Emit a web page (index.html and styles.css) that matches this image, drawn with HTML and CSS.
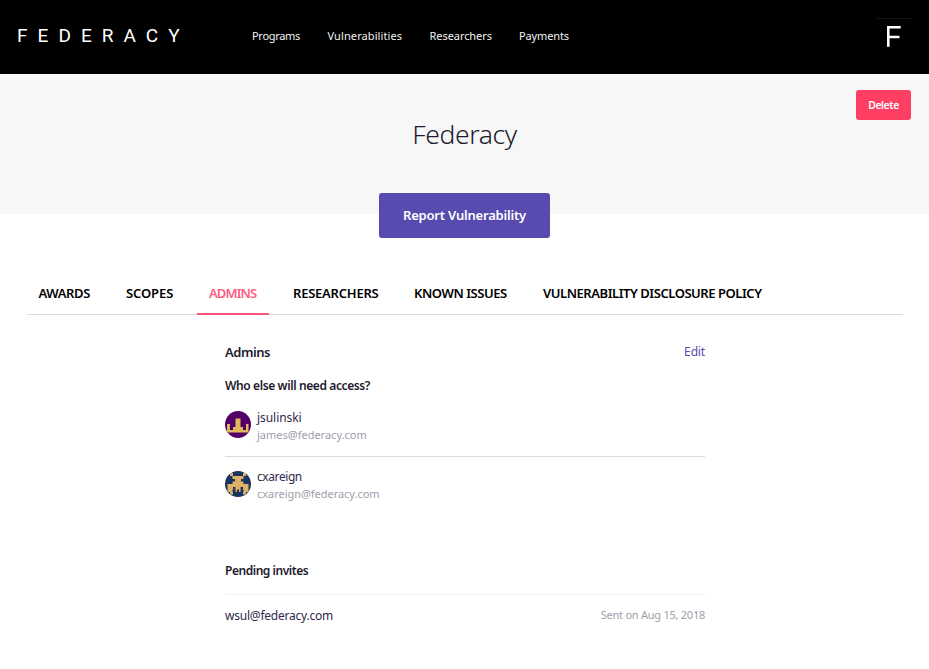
FILE: index.html
```html
<!DOCTYPE html>
<html lang="en">
<head>
<meta charset="utf-8">
<title>Federacy</title>
<link rel="stylesheet" href="styles.css">
</head>
<body>
<header class="topbar">
  <a class="logo">FEDERACY</a>
  <nav class="nav">
    <a>Programs</a><a>Vulnerabilities</a><a>Researchers</a><a>Payments</a>
  </nav>
  <div class="profile">
    <svg width="34" height="34" viewBox="0 0 34 34"><path d="M0 .5H34" stroke="#161616"/><path d="M11.300 28.800V9.200H23.700M11.300 19H22.500" fill="none" stroke="#fff" stroke-width="2.600"/></svg>
  </div>
</header>
<section class="hero">
  <button class="delete">Delete</button>
  <h1>Federacy</h1>
  <button class="report">Report Vulnerability</button>
</section>
<nav class="tabs">
  <a>AWARDS</a><a>SCOPES</a><a class="active">ADMINS</a><a>RESEARCHERS</a><a>KNOWN ISSUES</a><a>VULNERABILITY DISCLOSURE POLICY</a>
</nav>
<main class="content">
  <div class="heading"><h2>Admins</h2><a class="edit">Edit</a></div>
  <h3 class="question">Who else will need access?</h3>
  <div class="member first">
    <svg class="avatar" viewBox="0 0 26 27"><rect width="26" height="27" fill="#520066"/><path fill="#dfb75d" d="M2 13H5V19H8V16H10.500V7.500H15.500V16H18V19H21V13H23.500V21.500H2z"/></svg>
    <div><p class="name">jsulinski</p><p class="mail">james@federacy.com</p></div>
  </div>
  <div class="member second">
    <svg class="avatar" viewBox="0 0 26 26"><rect width="26" height="26" fill="#19355f"/><path fill="#deb068" d="M5 2H8V5H18V2H21V5H18.500V8H16V10.500H18.500V13H23.500V21H18.500V18.500H15.500V21H10.500V18.500H7.500V21H2.500V13H7.500V10.500H10V8H7.500V5H5zM5 21H8V23.500H5zM18 21H21V23.500H18z"/><path fill="#19355f" d="M8 16H10.500V18.500H8zM15.500 16H18V18.500H15.500zM12 18.500H14V21H12z"/></svg>
    <div><p class="name">cxareign</p><p class="mail">cxareign@federacy.com</p></div>
  </div>
  <h3 class="pending">Pending invites</h3>
  <div class="invite"><span class="address">wsul@federacy.com</span><span class="sent">Sent on Aug 15, 2018</span></div>
</main>
</body>
</html>
```
FILE: styles.css
```css
* { box-sizing: border-box; margin: 0; padding: 0; }
body { background: #fff; color: #1d1a2e; font-family: "Noto Sans", sans-serif; white-space: nowrap; }
button { border: 0; border-radius: 3px; color: #fff; font-family: inherit; font-weight: 600; display: block; }

.topbar { height: 74px; background: #000; color: #fff; display: flex; align-items: center; padding: 0 18px 0 17px; }
.logo { width: 235px; font: 400 19px/24px Roboto, sans-serif; letter-spacing: 10.05px; margin-top: -2px; }
.nav { display: flex; gap: 27px; font-size: 11px; line-height: 16px; margin-top: -2px; color: #f2f2f2; }
.nav a:nth-child(1) { width: 48.5px; letter-spacing: -.3px; }
.nav a:nth-child(2) { width: 75px; letter-spacing: .1px; }
.nav a:nth-child(3) { width: 62.5px; letter-spacing: -.06px; }
.nav a:nth-child(4) { letter-spacing: -.14px; }
.profile { margin-left: auto; height: 34px; margin-top: -4px; }
.profile svg { display: block; }

.hero { height: 140px; background: #f7f7f7; padding: 16px 18px 0; }
.delete { width: 55px; height: 30px; margin-left: auto; background: #ff3e64; font-size: 10.5px; letter-spacing: -.45px; }
h1 { font-size: 26.5px; line-height: 38px; font-weight: 300; text-align: center; letter-spacing: -.4px; margin-top: -5px; }
.report { width: 171px; height: 45px; margin: 40px auto 0; padding-bottom: 2px; background: #574bb0; font-size: 13px; letter-spacing: -.2px; }

.tabs { display: flex; gap: 12px; margin: 59px 26px 0 27px; height: 42px; border-bottom: 1px solid #dadbe2; color: #000; font-size: 13px; line-height: 41px; font-weight: 600; }
.tabs a { height: 42px; padding: 0 12px; }
.tabs a:nth-child(1) { width: 75px; padding-left: 11.5px; letter-spacing: -.4px; }
.tabs a:nth-child(2) { width: 71px; letter-spacing: -.1px; }
.tabs a:nth-child(3) { width: 72px; letter-spacing: -.88px; }
.tabs a:nth-child(4) { width: 109px; letter-spacing: -.23px; }
.tabs a:nth-child(5) { width: 117px; letter-spacing: -.45px; }
.tabs a:nth-child(6) { letter-spacing: -.45px; }
.tabs .active { color: #ff5c7f; border-bottom: 2px solid #ff5577; }

.content { width: 480px; margin: 27px auto 0 225px; font-size: 12px; }
.heading { display: flex; justify-content: space-between; line-height: 20px; }
h2 { font-size: 13px; font-weight: 600; letter-spacing: -.45px; }
.edit { color: #574bb0; letter-spacing: -.15px; }
h3 { font-size: 12px; line-height: 18px; font-weight: 600; letter-spacing: -.39px; }
.question { margin-top: 15px; }
.member { display: flex; gap: 6px; }
.first { height: 62px; padding-top: 14px; border-bottom: 1px solid #dadbe0; }
.second { height: 57px; padding-top: 11px; }
.avatar { width: 26px; height: 26px; border-radius: 50%; margin-top: 3px; }
.first .avatar { height: 27px; margin-top: 2px; }
.name { color: #30294d; line-height: 18px; letter-spacing: -.05px; }
.second .name { letter-spacing: -.42px; }
.mail { color: #9f9dab; font-size: 11px; line-height: 16px; letter-spacing: 0; }
.second .mail { letter-spacing: -.03px; }
.pending { margin-top: 48px; letter-spacing: -.46px; }
.invite { display: flex; justify-content: space-between; align-items: flex-start; border-top: 1px solid #f1f1f3; margin-top: 14px; padding-top: 12px; line-height: 18px; }
.address { color: #30294d; letter-spacing: -.22px; }
.sent { color: #9f9dab; font-size: 11px; line-height: 16px; letter-spacing: -.25px; }
```
